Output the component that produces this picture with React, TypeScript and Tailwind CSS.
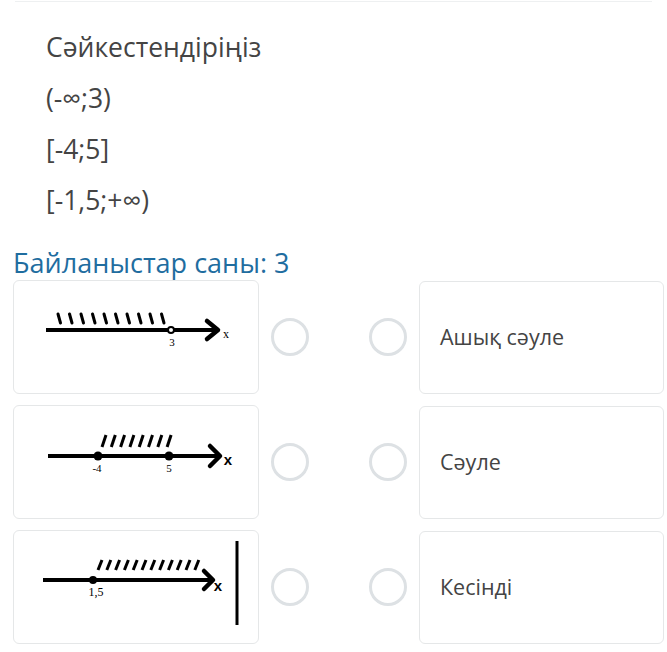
import React from 'react';

const FONT = { fontFamily: '"Open Sans", "Noto Sans", sans-serif' };

type Hatch = { x: number; y1: number; y2: number; dx: number };

const hatches = (start: number, step: number, count: number, y1: number, y2: number, dx: number): Hatch[] =>
  Array.from({ length: count }, (_, i) => ({ x: start + i * step, y1, y2, dx }));

// (-∞;3)
const OpenRay: React.FC = () => (
  <svg viewBox="0 0 244 112" className="w-full h-full">
    {hatches(44, 11.5, 10, 33, 42, 2.5).map((h, i) => (
      <line key={i} x1={h.x} y1={h.y1} x2={h.x + h.dx} y2={h.y2} stroke="#000" strokeWidth={3} strokeLinecap="round" />
    ))}
    <line x1={32} y1={49} x2={204} y2={49} stroke="#000" strokeWidth={4} />
    <polyline points="193,40 204,49 193,58" fill="none" stroke="#000" strokeWidth={4.5} strokeLinecap="round" strokeLinejoin="round" />
    <circle cx={157} cy={49} r={3} fill="#fff" stroke="#000" strokeWidth={2} />
    <text x={158} y={65} fontSize={11} fontFamily='"Liberation Serif", serif' textAnchor="middle">3</text>
    <text x={212} y={57} fontSize={12} fontFamily='"Liberation Serif", serif' textAnchor="middle">x</text>
  </svg>
);

// [-4;5]
const Segment: React.FC = () => (
  <svg viewBox="0 0 244 112" className="w-full h-full">
    {hatches(88, 9.3, 8, 29, 41, -4).map((h, i) => (
      <line key={i} x1={h.x - h.dx} y1={h.y1} x2={h.x} y2={h.y2} stroke="#000" strokeWidth={3} />
    ))}
    <line x1={34} y1={50} x2={206} y2={50} stroke="#000" strokeWidth={4} />
    <polyline points="196,40 206,50 196,60" fill="none" stroke="#000" strokeWidth={4.5} strokeLinecap="round" strokeLinejoin="round" />
    <circle cx={84} cy={50} r={4.5} fill="#000" />
    <circle cx={155} cy={50} r={4.5} fill="#000" />
    <text x={83} y={66} fontSize={11} fontFamily='"Liberation Serif", serif' textAnchor="middle">-4</text>
    <text x={155} y={66} fontSize={11} fontFamily='"Liberation Serif", serif' textAnchor="middle">5</text>
    <text x={214} y={59} fontSize={15} fontWeight={700} fontFamily='"Liberation Sans", sans-serif' textAnchor="middle">x</text>
  </svg>
);

// [-1,5;+∞)
const Ray: React.FC = () => (
  <svg viewBox="0 0 244 112" className="w-full h-full">
    {hatches(84, 8.8, 12, 29, 39, -4).map((h, i) => (
      <line key={i} x1={h.x - h.dx} y1={h.y1} x2={h.x} y2={h.y2} stroke="#000" strokeWidth={3} />
    ))}
    <line x1={29} y1={49} x2={199} y2={49} stroke="#000" strokeWidth={4} />
    <polyline points="190,40 199,49 190,58" fill="none" stroke="#000" strokeWidth={4.5} strokeLinecap="round" strokeLinejoin="round" />
    <circle cx={79} cy={49} r={4} fill="#000" />
    <text x={82} y={65} fontSize={12} fontFamily='"Liberation Serif", serif' textAnchor="middle">1,5</text>
    <text x={204} y={60} fontSize={15} fontWeight={700} fontFamily='"Liberation Sans", sans-serif' textAnchor="middle">x</text>
    <line x1={223} y1={10} x2={223} y2={94} stroke="#000" strokeWidth={3} />
  </svg>
);

const Radio: React.FC = () => (
  <div className="w-[38px] h-[38px] rounded-full border-[3px] border-[#dde1e4] bg-white shrink-0" />
);

const rows = [
  { picture: <OpenRay />, label: 'Ашық сәуле' },
  { picture: <Segment />, label: 'Сәуле' },
  { picture: <Ray />, label: 'Кесінді' },
];

const App: React.FC = () => {
  return (
    <div className="w-[667px] h-[652px] bg-white overflow-hidden text-[#444]" style={FONT}>
      <div className="mx-[15px] h-[2px] border-b border-[#eef0f1]" />

      <div className="pl-[46px] pt-[20px] text-[26.5px] leading-[51px]">
        <div>Сәйкестендіріңіз</div>
        <div>(-∞;3)</div>
        <div>[-4;5]</div>
        <div>[-1,5;+∞)</div>
      </div>

      <div className="pl-[13px] mt-[19px] text-[27px] leading-[36px] text-[#1f6d9f]">
        Байланыстар саны: 3
      </div>

      <div className="flex flex-col gap-[11px] mt-[-1px]">
        {rows.map((row, i) => (
          <div key={i} className="flex items-center h-[114px]">
            <div className="ml-[13px] w-[246px] h-[114px] border border-[#e5e7e8] rounded-[6px] bg-white shrink-0">
              {row.picture}
            </div>
            <div className="ml-[12px]">
              <Radio />
            </div>
            <div className="ml-[60px]">
              <Radio />
            </div>
            <div className="ml-[12px] w-[245px] h-[113px] border border-[#e5e7e8] rounded-[6px] bg-white flex items-center pl-[20px] text-[21.5px] shrink-0">
              {row.label}
            </div>
          </div>
        ))}
      </div>
    </div>
  );
};

export default App;
